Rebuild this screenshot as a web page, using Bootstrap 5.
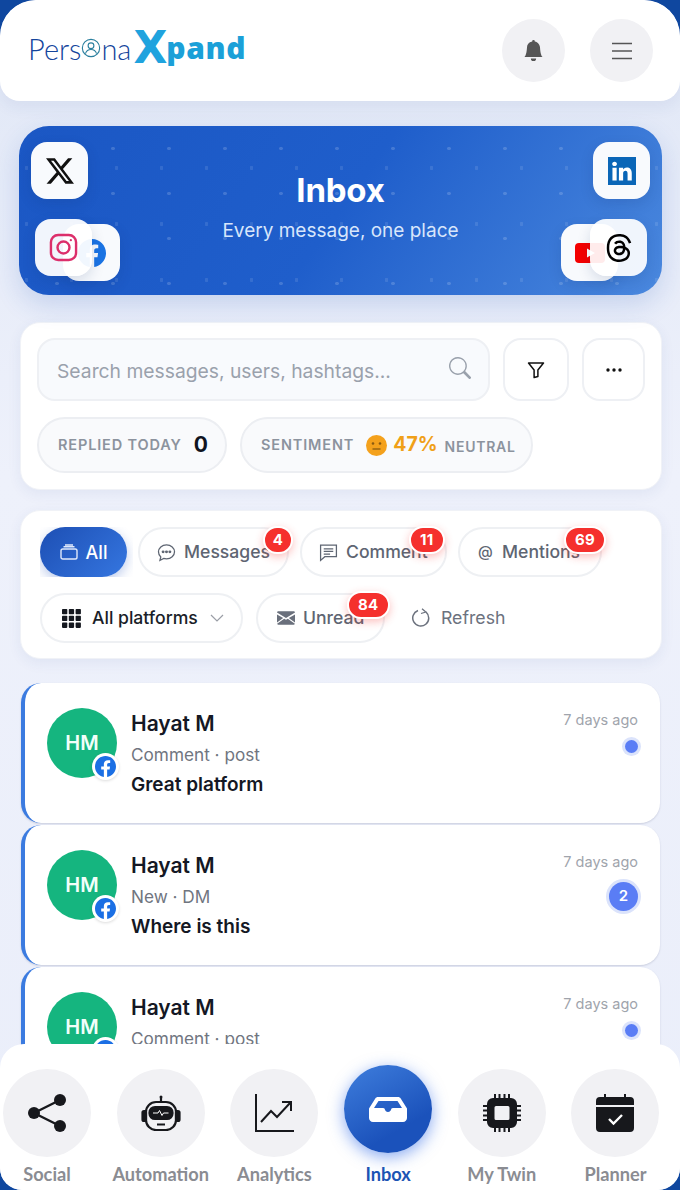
<!DOCTYPE html>
<html lang="en">
<head>
<meta charset="UTF-8" />
<meta name="viewport" content="width=device-width, initial-scale=1" />
<title>PersonaXpand Inbox</title>
<link href="https://cdn.jsdelivr.net/npm/bootstrap@5.3.0/dist/css/bootstrap.min.css" rel="stylesheet" />
<style>
    html, body { height: 100%; }
    body { background: #0f479f; font-family: Inter, "Liberation Sans", sans-serif; overflow: hidden; }
    .shell { height: 1190px; border-radius: 36px 36px 22px 22px; overflow: hidden; position: relative; background: linear-gradient(180deg, #e0e7f6 0%, #eef1fb 40%, #eaeefa 100%); }
    .top-bar { height: 101px; background: #fff; border-radius: 36px 36px 20px 20px; padding: 19px 27px 0 28px; box-shadow: 0 6px 16px rgba(40,70,140,.07); }
    .brand { height: 58px; line-height: 1; white-space: nowrap; }
    .brand-thin { font-family: Lato, sans-serif; font-weight: 300; font-size: 29px; color: #14459c; }
    .brand-x { font-family: "DejaVu Sans", sans-serif; font-weight: 700; font-size: 44px; color: #1fa3de; margin-left: 2px; letter-spacing: -1px; }
    .brand-bold { font-family: "Open Sans", sans-serif; font-weight: 800; font-size: 30px; color: #1ba0d8; letter-spacing: .6px; }
    .top-actions { gap: 25px; }
    .round-btn { width: 63px; height: 63px; border-radius: 50%; background: #f1f1f4; }
    .hero { margin: 25px 18px 0 19px; height: 169px; border-radius: 30px; position: relative; color: #fff; text-align: center; padding-top: 43px;
        background-color: #1f5ccb;
        background-image: radial-gradient(rgba(255,255,255,.16) 1.7px, transparent 2.2px), radial-gradient(rgba(255,255,255,.1) 1.5px, transparent 2px), linear-gradient(125deg, #1b57c4 0%, #1f5ecb 50%, #4a88de 100%);
        background-size: 56px 45px, 45px 56px, 100% 100%; background-position: 10px 0, 30px 14px, 0 0;
        box-shadow: 0 10px 26px rgba(40,90,190,.18); }
    .hero-title { font-size: 33px; font-weight: 700; line-height: 42px; letter-spacing: -.2px; }
    .hero-sub { font-size: 19px; line-height: 28px; color: #d8e6fb; margin-top: 6px; }
    .tile { position: absolute; width: 57px; height: 57px; border-radius: 16px; background: #f8fafd; box-shadow: 0 5px 14px rgba(15,40,100,.14); }
    .tile-x { left: 12px; top: 16px; }
    .tile-in { right: 12px; top: 16px; }
    .tile-ig { left: 16px; top: 93px; z-index: 2; background: rgba(255,255,255,.94); }
    .tile-fb { left: 44px; top: 98px; overflow: hidden; }
    .tile-yt { right: 44px; top: 98px; overflow: hidden; }
    .tile-th { right: 15px; top: 93px; z-index: 2; background: rgba(255,255,255,.92); }
    .fb-mark { flex: none; margin-left: 15px; }
    .yt-mark { flex: none; margin-left: 14px; }
    .panel { background: #fff; border-radius: 20px; margin: 0 18px 0 20px; box-shadow: 0 4px 14px rgba(40,70,140,.07); border: 1px solid #f0f2f7; }
    .search-panel { margin-top: 27px; height: 168px; padding: 15px 16px 0 16px; }
    .search-box { width: 454px; height: 63px; border-radius: 18px; background: #f8fafd; border: 2px solid #eef0f4; padding: 0 17px 0 18px; }
    .search-box .form-control { background: transparent; border: 0; padding: 3px 0 0; box-shadow: none; font-size: 19.3px; color: #9aa1ac; }
    .search-box .form-control::placeholder { color: #9aa1ac; }
    .search-icon { flex: none; margin-bottom: 4px; }
    .square-btn { height: 63px; border-radius: 18px; background: #fff; border: 2px solid #eef0f4; margin-left: 13px; }
    .btn-filter { width: 66px; }
    .btn-more { width: 63px; }
    .stat-row { margin-top: 16px; gap: 13px; }
    .stat-pill { height: 56px; border-radius: 28px; background: #f9fafc; border: 2px solid #eceef2; padding: 0 19px; font-size: 14.5px; font-weight: 600; letter-spacing: .85px; color: #8c939e; white-space: nowrap; }
    .stat-replied { width: 190px; }
    .stat-sent { width: 293px; }
    .stat-num { font-size: 21px; font-weight: 700; color: #10141f; letter-spacing: 0; margin-right: -2px; }
    .stat-face { flex: none; margin-left: 12px; }
    .stat-pct { font-size: 19.5px; font-weight: 700; color: #f0a018; letter-spacing: 0; margin-left: 6px; }
    .stat-tail { margin-left: 7px; margin-top: 3px; font-size: 14px; letter-spacing: .75px; }
    .filter-panel { margin-top: 20px; height: 149px; padding: 16px 19px 0 19px; }
    .chip-row { gap: 11px; }
    .chip-row-two { margin-top: 16px; }
    .all-clip { width: 93px; height: 50px; overflow: hidden; margin-right: -6px; }
    .all-pill { width: 87px; height: 50px; border-radius: 25px; background: linear-gradient(135deg, #1d4fb4, #3576e0); color: #fff; font-size: 18px; font-weight: 500; box-shadow: 0 4px 12px rgba(30,80,190,.3); }
    .chip { position: relative; height: 50px; border-radius: 25px; background: #fff; border: 2px solid #eef0f3; font-size: 17.6px; font-weight: 500; color: #5e6572; white-space: nowrap; }
    .chip-msg { width: 151px; padding-left: 17px; }
    .chip-com { width: 147px; padding-left: 17px; }
    .chip-men { width: 144px; padding-left: 18px; }
    .chip-at { font-size: 15px; width: 16px; }
    .chip-platform { width: 203px; padding-left: 20px; color: #1a1e28; }
    .chip-platform-label { margin-left: 11px; }
    .chip-caret { margin-right: 17px; }
    .chip-unread { width: 129px; padding-left: 19px; margin-left: 13px; }
    .refresh { margin-left: 26px; font-size: 17.7px; color: #6c727e; }
    .refresh-label { margin-left: 11px; }
    .count-badge { position: absolute; top: -3px; height: 28px; padding: 0 9px; min-width: 30px; text-align: center; border-radius: 14px; background: #f5302d; color: #fff; font-size: 15px; font-weight: 700; line-height: 24px; border: 2px solid #fff; box-shadow: 0 3px 9px rgba(245,50,45,.3); letter-spacing: .3px; }
    .badge-msg { left: 123px; padding: 0; }
    .badge-com { left: 107px; }
    .badge-men { left: 104px; }
    .badge-unread { left: 89px; top: -4px; }
    .msg-list { margin: 24px 20px 0 21px; }
    .msg-card { height: 140px; margin-bottom: 2px; background: #fff; border-left: 4px solid #3b7be0; border-radius: 20px; box-shadow: 0 1px 2px rgba(30,40,80,.16); padding: 25px 22px 0 22px; }
    .avatar { width: 70px; height: 70px; border-radius: 50%; background: #15b57f; color: #f2fffa; font-size: 20px; font-weight: 600; position: relative; flex: none; }
    .fb-badge { position: absolute; left: 45px; top: 45px; width: 27px; height: 27px; border-radius: 50%; background: #fff; box-shadow: 0 1px 3px rgba(0,0,0,.14); }
    .msg-body { margin-left: 14px; }
    .msg-name { font-size: 21px; font-weight: 600; color: #141824; line-height: 28px; margin-top: 2px; }
    .msg-type { font-size: 17.2px; color: #70757f; line-height: 24px; margin-top: 5px; }
    .msg-text { font-size: 19px; font-weight: 600; color: #141824; line-height: 26px; margin-top: 5px; }
    .msg-time { font-size: 14.5px; color: #a0a4ac; line-height: 22px; margin-top: 1px; }
    .unread-dot { width: 13px; height: 13px; border-radius: 50%; background: #5a7df5; box-shadow: 0 0 0 3px #dbe3fb; margin-top: 9px; }
    .unread-num { width: 29px; height: 29px; border-radius: 50%; background: #5a7df5; color: #fff; font-size: 15px; font-weight: 600; box-shadow: 0 0 0 3px #dbe3fb; margin-top: 9px; }
    .bottom-nav { position: absolute; left: 0; right: 0; bottom: 0; height: 146px; background: #fff; border-radius: 24px 24px 0 0; padding: 25px 3px 0 3px; }
    .nav-col { width: 88px; font-family: Lato, sans-serif; font-weight: 700; font-size: 18.2px; color: #8a8c92; white-space: nowrap; }
    .nav-col + .nav-col { margin-left: 25.7px; }
    .nav-dot { width: 88px; height: 88px; border-radius: 50%; background: #f1f1f4; margin-bottom: 4px; flex: none; }
    .nav-active { color: #1c55b5; }
    .nav-active .nav-dot { background: linear-gradient(150deg, #3f7edd, #1b52bb 70%); box-shadow: 0 4px 16px rgba(40,100,230,.55); position: relative; top: -4px; }
</style>
</head>
<body>
<div class="shell">
    <header class="top-bar d-flex justify-content-between">
        <div class="brand d-flex align-items-center">
            <span class="brand-thin">Pers</span>
            <svg width="20" height="20" viewBox="0 0 18 18" fill="none" stroke="#2a7f9e" stroke-width="1"><circle cx="9" cy="9" r="7.8"/><circle cx="9" cy="7" r="2.6"/><path d="M4 14c1-3 3-3.6 5-3.6s4 .6 5 3.6"/></svg>
            <span class="brand-thin">na</span>
            <span class="brand-x">X</span>
            <span class="brand-bold">pand</span>
        </div>
        <div class="top-actions d-flex">
            <div class="round-btn d-flex align-items-center justify-content-center">
                <svg width="21" height="23" viewBox="0 0 16 16" fill="#555"><path d="M8 16a2 2 0 0 0 2-2H6a2 2 0 0 0 2 2zm.995-14.901a1 1 0 1 0-1.99 0A5.002 5.002 0 0 0 3 6c0 1.098-.5 6-2 7h14c-1.5-1-2-5.902-2-7 0-2.42-1.72-4.44-4.005-4.901z"/></svg>
            </div>
            <div class="round-btn d-flex align-items-center justify-content-center">
                <svg width="20" height="18" viewBox="0 0 20 18" stroke="#555" stroke-width="1.6"><path d="M0 1.5h20M0 9h20M0 16.5h20"/></svg>
            </div>
        </div>
    </header>

    <section class="hero">
        <div class="tile tile-x d-flex align-items-center justify-content-center">
            <svg width="28" height="28" viewBox="0 0 16 16" fill="#111"><path d="M12.6.75h2.454l-5.36 6.142L16 15.25h-4.937l-3.867-5.07-4.425 5.07H.316l5.733-6.57L0 .75h5.063l3.495 4.633L12.601.75Zm-.86 13.028h1.36L4.323 2.145H2.865l8.875 11.633Z"/></svg>
        </div>
        <div class="tile tile-in d-flex align-items-center justify-content-center">
            <svg width="28" height="28" viewBox="0 0 16 16"><rect width="16" height="16" fill="#0a66b7"/><path fill="#fff" d="M4.943 13.394V6.169H2.542v7.225h2.401zm-1.2-8.212c.837 0 1.358-.554 1.358-1.248-.015-.709-.52-1.248-1.342-1.248-.822 0-1.359.54-1.359 1.248 0 .694.521 1.248 1.327 1.248h.016zm4.908 8.212V9.359c0-.216.016-.432.08-.586.173-.431.568-.878 1.232-.878.869 0 1.216.662 1.216 1.634v3.865h2.401V9.25c0-2.22-1.184-3.252-2.764-3.252-1.274 0-1.845.7-2.165 1.193V6.169h-2.4c.03.678 0 7.225 0 7.225h2.4z"/></svg>
        </div>
        <div class="tile tile-fb d-flex align-items-center">
            <svg class="fb-mark" width="28" height="28" viewBox="0 0 16 16" fill="#1b74e4"><path d="M16 8.049c0-4.446-3.582-8.05-8-8.05C3.58 0-.002 3.603-.002 8.05c0 4.017 2.926 7.347 6.75 7.951v-5.625h-2.03V8.05H6.75V6.275c0-2.017 1.195-3.131 3.022-3.131.876 0 1.791.157 1.791.157v1.98h-1.009c-.993 0-1.303.621-1.303 1.258v1.51h2.218l-.354 2.326H9.25V16c3.824-.604 6.75-3.934 6.75-7.951z"/></svg>
        </div>
        <div class="tile tile-ig d-flex align-items-center justify-content-center">
            <svg width="29" height="29" viewBox="0 0 30 30" fill="none" stroke="#dc2f6b" stroke-width="2.5"><rect x="2" y="2" width="26" height="26" rx="7.5"/><circle cx="15" cy="15" r="6.2"/><circle cx="22.6" cy="7.4" r="1.2" fill="#dc2f6b" stroke="none"/></svg>
        </div>
        <div class="tile tile-yt d-flex align-items-center">
            <svg class="yt-mark" width="30" height="20" viewBox="0 0 30 20"><rect width="30" height="20" rx="4" fill="#f40000"/><path d="M12 5.5l8 4.5-8 4.5z" fill="#fff"/></svg>
        </div>
        <div class="tile tile-th d-flex align-items-center justify-content-center">
            <svg width="28" height="28" viewBox="0 0 16 16" fill="#000"><path d="M6.321 6.016c-.27-.18-1.166-.802-1.166-.802.756-1.081 1.753-1.502 3.132-1.502.975 0 1.803.327 2.394.948.591.621.928 1.509 1.005 2.644.328.138.63.299.905.484 1.109.745 1.719 1.86 1.719 3.137 0 2.716-2.226 5.075-6.256 5.075C4.594 16 1 13.987 1 7.994 1 2.034 4.482 0 8.044 0 9.69 0 13.55.243 15 5.036l-1.36.353C12.516 1.974 10.163 1.43 8.006 1.43c-3.565 0-5.582 2.171-5.582 6.79 0 4.143 2.254 6.343 5.63 6.343 2.777 0 4.847-1.443 4.847-3.556 0-1.438-1.208-2.127-1.27-2.127-.236 1.234-.868 3.31-3.644 3.31-1.618 0-3.013-1.118-3.013-2.582 0-2.09 1.984-2.847 3.55-2.847.586 0 1.294.04 1.663.114 0-.637-.54-1.728-1.9-1.728-1.25 0-1.566.405-1.967.868ZM8.716 8.19c-2.04 0-2.304.87-2.304 1.416 0 .878 1.043 1.168 1.6 1.168 1.02 0 2.067-.282 2.232-2.423a6.217 6.217 0 0 0-1.528-.161Z"/></svg>
        </div>
        <div class="hero-title">Inbox</div>
        <div class="hero-sub">Every message, one place</div>
    </section>

    <section class="panel search-panel">
        <div class="d-flex">
            <div class="search-box d-flex align-items-center">
                <input class="form-control" type="text" placeholder="Search messages, users, hashtags..." />
                <svg class="search-icon" width="22" height="22" viewBox="0 0 16 16" fill="#9aa1ac"><path d="M11.742 10.344a6.5 6.5 0 1 0-1.397 1.398h-.001c.03.04.062.078.098.115l3.85 3.85a1 1 0 0 0 1.415-1.414l-3.85-3.85a1.007 1.007 0 0 0-.115-.1zM12 6.5a5.5 5.5 0 1 1-11 0 5.5 5.5 0 0 1 11 0z"/></svg>
            </div>
            <div class="square-btn btn-filter d-flex align-items-center justify-content-center">
                <svg width="18" height="18" viewBox="0 0 18 18" fill="none" stroke="#111" stroke-width="1.5" stroke-linejoin="round"><path d="M1.5 2h15l-5.6 7v6.5l-3.8 1V9z"/></svg>
            </div>
            <div class="square-btn btn-more d-flex align-items-center justify-content-center">
                <svg width="16" height="4" viewBox="0 0 16 4" fill="#111"><circle cx="2" cy="2" r="1.7"/><circle cx="8" cy="2" r="1.7"/><circle cx="14" cy="2" r="1.7"/></svg>
            </div>
        </div>
        <div class="stat-row d-flex">
            <div class="stat-pill stat-replied d-flex align-items-center">
                <span>REPLIED TODAY</span><span class="stat-num ms-auto">0</span>
            </div>
            <div class="stat-pill stat-sent d-flex align-items-center">
                <span>SENTIMENT</span>
                <svg class="stat-face" width="21" height="21" viewBox="0 0 21 21"><circle cx="10.5" cy="10.5" r="10.5" fill="#f4a11c"/><circle cx="7" cy="8.5" r="1.3" fill="#8a5a10"/><circle cx="14" cy="8.5" r="1.3" fill="#8a5a10"/><path d="M6.5 14h8" stroke="#8a5a10" stroke-width="1.3"/></svg>
                <span class="stat-pct">47%</span>
                <span class="stat-tail">NEUTRAL</span>
            </div>
        </div>
    </section>

    <section class="panel filter-panel">
        <div class="chip-row d-flex">
            <div class="all-clip">
                <div class="all-pill d-flex align-items-center justify-content-center gap-2">
                    <svg width="18" height="16" viewBox="0 0 18 16" fill="none" stroke="#dfe9fb" stroke-width="1.4"><rect x="1" y="5" width="16" height="10" rx="1.8"/><path d="M3.5 2.8h11M5 1h8"/></svg>
                    All
                </div>
            </div>
            <div class="chip chip-msg d-flex align-items-center">
                <svg class="me-2" width="19" height="19" viewBox="0 0 18 18" fill="none" stroke="#5e6572" stroke-width="1.2"><path d="M9 1.8c4.3 0 7.6 2.9 7.6 6.6S13.3 15 9 15c-.9 0-1.8-.1-2.6-.4L2.8 16.4l.8-3.2C2.1 12 1.4 10.3 1.4 8.4 1.4 4.7 4.7 1.8 9 1.8z"/><circle cx="5.8" cy="8.4" r=".8" fill="#5e6572"/><circle cx="9" cy="8.4" r=".8" fill="#5e6572"/><circle cx="12.2" cy="8.4" r=".8" fill="#5e6572"/></svg>
                Messages
                <span class="count-badge badge-msg">4</span>
            </div>
            <div class="chip chip-com d-flex align-items-center">
                <svg class="me-2" width="19" height="19" viewBox="0 0 18 18" fill="none" stroke="#5e6572" stroke-width="1.2"><path d="M1.5 2h15v11h-11l-4 3.5zM4.5 5.5h9M4.5 8h9M4.5 10.5h6"/></svg>
                Comment
                <span class="count-badge badge-com">11</span>
            </div>
            <div class="chip chip-men d-flex align-items-center">
                <span class="chip-at me-2">@</span>
                Mentions
                <span class="count-badge badge-men">69</span>
            </div>
        </div>
        <div class="chip-row-two d-flex align-items-center">
            <div class="chip chip-platform d-flex align-items-center">
                <svg width="19" height="19" viewBox="0 0 19 19" fill="#15181f"><rect width="5.3" height="5.3" rx=".8"/><rect x="6.8" width="5.3" height="5.3" rx=".8"/><rect x="13.6" width="5.3" height="5.3" rx=".8"/><rect y="6.8" width="5.3" height="5.3" rx=".8"/><rect x="6.8" y="6.8" width="5.3" height="5.3" rx=".8"/><rect x="13.6" y="6.8" width="5.3" height="5.3" rx=".8"/><rect y="13.6" width="5.3" height="5.3" rx=".8"/><rect x="6.8" y="13.6" width="5.3" height="5.3" rx=".8"/><rect x="13.6" y="13.6" width="5.3" height="5.3" rx=".8"/></svg>
                <span class="chip-platform-label">All platforms</span>
                <svg class="chip-caret ms-auto" width="14" height="8" viewBox="0 0 14 8" fill="none" stroke="#9a9ea6" stroke-width="1.2"><path d="M1 1l6 6 6-6"/></svg>
            </div>
            <div class="chip chip-unread d-flex align-items-center">
                <svg class="me-2" width="18" height="14" viewBox="0 0 16 12" fill="#6a707c"><path d="M0 1.2C0 .5.5 0 1.2 0h13.6c.7 0 1.2.5 1.2 1.2L8 6 0 1.2zM0 2.8v7.100l5.500-3.800zM16 2.800v7.100l-5.500-3.800zM6.400 6.700L8 7.600l1.600-.9L15.900 11c-.2.6-.6 1-1.100 1H1.200c-.5 0-.9-.4-1.100-1z"/></svg>
                Unread
                <span class="count-badge badge-unread">84</span>
            </div>
            <div class="refresh d-flex align-items-center">
                <svg width="19" height="19" viewBox="0 0 19 19" fill="none" stroke="#6c727e" stroke-width="1.5"><path d="M7 2.500a8 8 0 1 0 8 1.500"/><path d="M11 .8L14.800 4l-4.800 1.500" stroke-width="1.3"/></svg>
                <span class="refresh-label">Refresh</span>
            </div>
        </div>
    </section>

    <section class="msg-list">
        <article class="msg-card d-flex">
            <div class="avatar d-flex align-items-center justify-content-center">HM
                <span class="fb-badge d-flex align-items-center justify-content-center"><svg width="21" height="21" viewBox="0 0 16 16" fill="#1b6fe4"><path d="M16 8.049c0-4.446-3.582-8.05-8-8.05C3.58 0-.002 3.603-.002 8.05c0 4.017 2.926 7.347 6.75 7.951v-5.625h-2.03V8.05H6.75V6.275c0-2.017 1.195-3.131 3.022-3.131.876 0 1.791.157 1.791.157v1.98h-1.009c-.993 0-1.303.621-1.303 1.258v1.51h2.218l-.354 2.326H9.25V16c3.824-.604 6.75-3.934 6.75-7.951z"/></svg></span>
            </div>
            <div class="msg-body">
                <div class="msg-name">Hayat M</div>
                <div class="msg-type">Comment · post</div>
                <div class="msg-text">Great platform</div>
            </div>
            <div class="ms-auto d-flex flex-column align-items-end">
                <div class="msg-time">7 days ago</div>
                <div class="unread-dot"></div>
            </div>
        </article>
        <article class="msg-card d-flex">
            <div class="avatar d-flex align-items-center justify-content-center">HM
                <span class="fb-badge d-flex align-items-center justify-content-center"><svg width="21" height="21" viewBox="0 0 16 16" fill="#1b6fe4"><path d="M16 8.049c0-4.446-3.582-8.05-8-8.05C3.58 0-.002 3.603-.002 8.05c0 4.017 2.926 7.347 6.75 7.951v-5.625h-2.03V8.05H6.75V6.275c0-2.017 1.195-3.131 3.022-3.131.876 0 1.791.157 1.791.157v1.98h-1.009c-.993 0-1.303.621-1.303 1.258v1.51h2.218l-.354 2.326H9.25V16c3.824-.604 6.75-3.934 6.75-7.951z"/></svg></span>
            </div>
            <div class="msg-body">
                <div class="msg-name">Hayat M</div>
                <div class="msg-type">New · DM</div>
                <div class="msg-text">Where is this</div>
            </div>
            <div class="ms-auto d-flex flex-column align-items-end">
                <div class="msg-time">7 days ago</div>
                <div class="unread-num d-flex align-items-center justify-content-center">2</div>
            </div>
        </article>
        <article class="msg-card d-flex">
            <div class="avatar d-flex align-items-center justify-content-center">HM
                <span class="fb-badge d-flex align-items-center justify-content-center"><svg width="21" height="21" viewBox="0 0 16 16" fill="#1b6fe4"><path d="M16 8.049c0-4.446-3.582-8.05-8-8.05C3.58 0-.002 3.603-.002 8.05c0 4.017 2.926 7.347 6.75 7.951v-5.625h-2.03V8.05H6.75V6.275c0-2.017 1.195-3.131 3.022-3.131.876 0 1.791.157 1.791.157v1.98h-1.009c-.993 0-1.303.621-1.303 1.258v1.51h2.218l-.354 2.326H9.25V16c3.824-.604 6.75-3.934 6.75-7.951z"/></svg></span>
            </div>
            <div class="msg-body">
                <div class="msg-name">Hayat M</div>
                <div class="msg-type">Comment · post</div>
            </div>
            <div class="ms-auto d-flex flex-column align-items-end">
                <div class="msg-time">7 days ago</div>
                <div class="unread-dot"></div>
            </div>
        </article>
    </section>

    <nav class="bottom-nav d-flex">
        <div class="nav-col d-flex flex-column align-items-center">
            <div class="nav-dot d-flex align-items-center justify-content-center">
                <svg width="40" height="40" viewBox="0 0 40 40" fill="#17181c"><circle cx="33" cy="7" r="6"/><circle cx="33" cy="33" r="6"/><circle cx="7" cy="20" r="6"/><path d="M7 20L33 7M7 20l26 13" stroke="#17181c" stroke-width="2.4"/></svg>
            </div>
            <span>Social</span>
        </div>
        <div class="nav-col d-flex flex-column align-items-center">
            <div class="nav-dot d-flex align-items-center justify-content-center">
                <svg width="40" height="36" viewBox="0 0 40 36" fill="none" stroke="#17181c" stroke-width="2.2"><circle cx="20" cy="2" r="1.5" fill="#17181c" stroke="none"/><path d="M20 3v4"/><rect x="5" y="7" width="30" height="28" rx="10"/><rect x="1.5" y="16" width="3.5" height="10" rx="1.5" fill="#17181c"/><rect x="35" y="16" width="3.5" height="10" rx="1.5" fill="#17181c"/><rect x="8.5" y="12" width="23" height="12" rx="5.5" fill="#17181c"/><path d="M12 18h5l1.5-2.500 2.500 5 1.500-2.500h5" stroke="#fff" stroke-width="1"/><path d="M16 29.500h8" stroke-width="2"/></svg>
            </div>
            <span>Automation</span>
        </div>
        <div class="nav-col d-flex flex-column align-items-center">
            <div class="nav-dot d-flex align-items-center justify-content-center">
                <svg width="40" height="38" viewBox="0 0 40 38" fill="none" stroke="#17181c" stroke-width="2"><path d="M2 0v37h38"/><path d="M7 28l10-11 6 6L36 9"/><path d="M28 8h9v9"/></svg>
            </div>
            <span>Analytics</span>
        </div>
        <div class="nav-col nav-active d-flex flex-column align-items-center">
            <div class="nav-dot d-flex align-items-center justify-content-center">
                <svg width="38" height="25" viewBox="0 0 38 25" fill="#fff"><path d="M9 0h20c1.2 0 2 .5 2.7 1.5L38 11.5V21c0 2.2-1.8 4-4 4H4c-2.2 0-4-1.8-4-4v-9.500L6.300 1.500C7 .5 7.800 0 9 0zM9.500 4L5 11h9c1.500 0 1.800 1 2 1.800.3 1.200 1.300 2.200 3 2.200s2.700-1 3-2.200c.2-.8.5-1.800 2-1.800h9l-4.500-7z"/></svg>
            </div>
            <span>Inbox</span>
        </div>
        <div class="nav-col d-flex flex-column align-items-center">
            <div class="nav-dot d-flex align-items-center justify-content-center">
                <svg width="38" height="38" viewBox="0 0 38 38" fill="#17181c"><path d="M11 0h2v6h-2zM15.500 0h2v6h-2zM20.500 0h2v6h-2zM25 0h2v6h-2zM11 32h2v6h-2zM15.500 32h2v6h-2zM20.500 32h2v6h-2zM25 32h2v6h-2zM0 11h6v2H0zM0 15.500h6v2H0zM0 20.500h6v2H0zM0 25h6v2H0zM32 11h6v2h-6zM32 15.500h6v2h-6zM32 20.500h6v2h-6zM32 25h6v2h-6z"/><path fill-rule="evenodd" d="M10 4h18a6 6 0 0 1 6 6v18a6 6 0 0 1-6 6H10a6 6 0 0 1-6-6V10a6 6 0 0 1 6-6zm3 8a1.500 1.500 0 0 0-1.500 1.500v11A1.500 1.500 0 0 0 13 26h12a1.500 1.500 0 0 0 1.500-1.500v-11A1.500 1.500 0 0 0 25 12z"/></svg>
            </div>
            <span>My Twin</span>
        </div>
        <div class="nav-col d-flex flex-column align-items-center">
            <div class="nav-dot d-flex align-items-center justify-content-center">
                <svg width="38" height="38" viewBox="0 0 38 38" fill="#17181c"><path d="M8 0h2v3h18V0h2v3h4a4 4 0 0 1 4 4v4H0V7a4 4 0 0 1 4-4h4zM0 13h38v21a4 4 0 0 1-4 4H4a4 4 0 0 1-4-4z"/><path d="M13 25l4.500 4.500L26 21" fill="none" stroke="#fff" stroke-width="2.4"/></svg>
            </div>
            <span>Planner</span>
        </div>
    </nav>
</div>
<script src="https://cdn.jsdelivr.net/npm/bootstrap@5.3.0/dist/js/bootstrap.bundle.min.js"></script>
</body>
</html>
